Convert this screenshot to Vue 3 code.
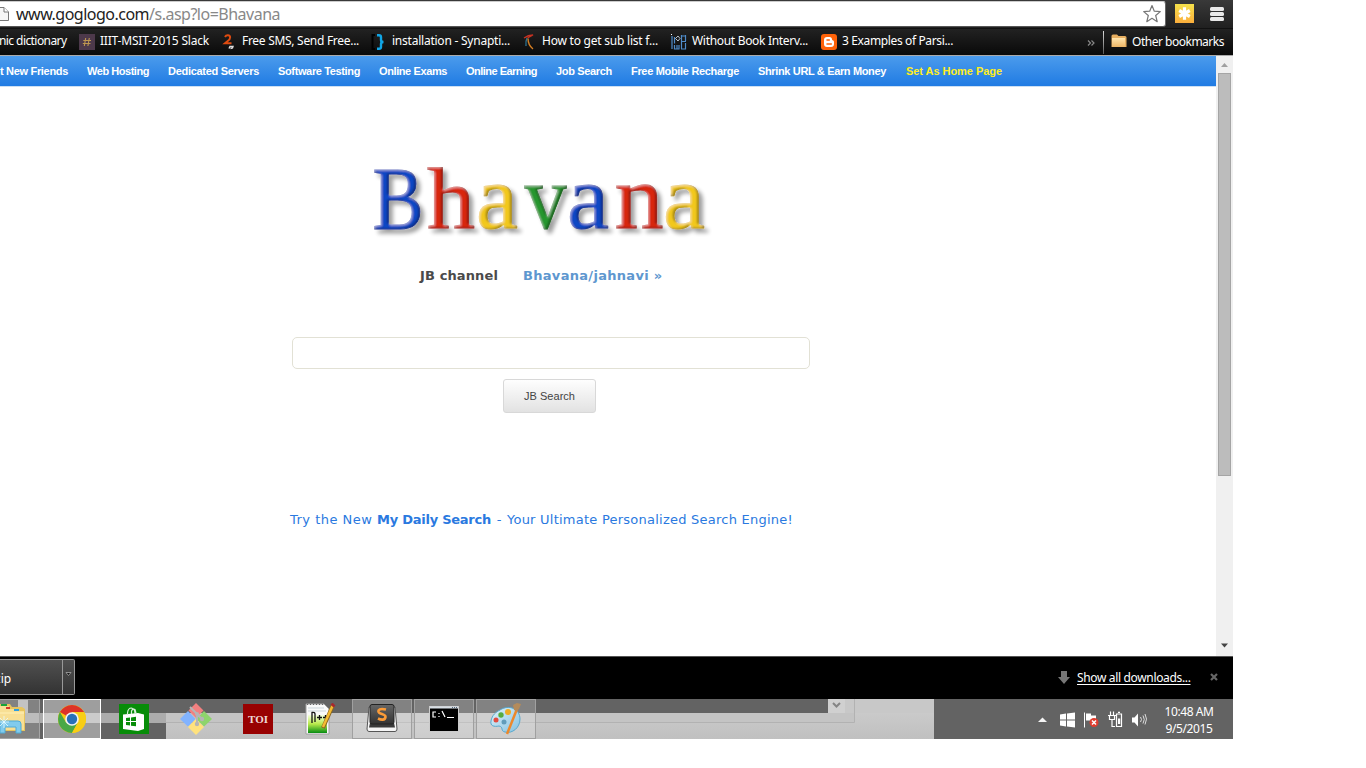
<script setup>
const bookmarks = [
  { t: 'nic dictionary', w: 67.5, icon: '' },
  { t: 'IIIT-MSIT-2015 Slack', w: 109, icon: 'slack' },
  { t: 'Free SMS, Send Free...', w: 117, icon: 'two' },
  { t: 'installation - Synapti...', w: 118, icon: 'brace' },
  { t: 'How to get sub list f...', w: 116, icon: 'arc' },
  { t: 'Without Book Interv...', w: 116, icon: 'web' },
  { t: '3 Examples of Parsi...', w: 111, icon: 'blogger' },
]
const nav = [
  ['t New Friends', 68], ['Web Hosting', 62], ['Dedicated Servers', 91], ['Software Testing', 82],
  ['Online Exams', 68], ['Online Earning', 71], ['Job Search', 56], ['Free Mobile Recharge', 108],
  ['Shrink URL & Earn Money', 128], ['Set As Home Page', 96],
]
const letters = [
  ['B', 372.5, 51, 'blue', 89], ['h', 427, 48, 'red', 87], ['a', 476, 42, 'gold', 90], ['v', 524.5, 42, 'green', 90],
  ['a', 567, 42, 'blue', 90], ['n', 614.5, 49, 'red', 90], ['a', 663, 42, 'gold', 90],
]
const colors = { blue: '#0846c4', red: '#d8260f', gold: '#f2c81f', green: '#27962e' }

/* Spreads letter spacing so that a label fills its given width. */
const vFit = {
  mounted(el, { value }) {
    el.style.letterSpacing = '0px'
    const natural = el.getBoundingClientRect().width
    el.style.letterSpacing = (value - natural) / el.textContent.length + 'px'
  },
}
</script>

<template>
  <div class="screen">
    <header class="toolbar">
      <div class="address">
        <svg class="doc" width="10" height="16" viewBox="0 0 10 16"><path d="M-4 1.500H4L8.500 6V14.500H-4Z" fill="#f6f6f6" stroke="#777" /><path d="M4 1.500V6H8.500" fill="#fff" stroke="#777" /></svg>
        <span class="url" v-fit="264">www.goglogo.com<i>/s.asp?lo=Bhavana</i></span>
        <svg class="star" width="20" height="20" viewBox="0 0 20 20"><path d="M10 1.500 12.300 7.200 18.300 7.600 13.700 11.500 15.200 17.700 10 14.300 4.800 17.700 6.300 11.500 1.700 7.600 7.700 7.200Z" fill="#fff" stroke="#777" stroke-width="1.200" stroke-linejoin="round" /></svg>
      </div>
      <svg class="ext" width="19" height="19" viewBox="0 0 19 19">
        <defs><linearGradient id="ye" x2="0" y2="1"><stop stop-color="#f5e14b" /><stop offset="1" stop-color="#fbae3c" /></linearGradient></defs>
        <rect width="19" height="19" fill="url(#ye)" /><path d="M9.500 3.300V15.700M4.200 6.500 14.800 12.500M4.200 12.500 14.800 6.500" stroke="#fff" stroke-width="3.200" />
      </svg>
      <svg class="menu" width="14" height="15" viewBox="0 0 14 15"><g fill="#e8e8e8"><rect y="0" width="14" height="4" rx="1.500" /><rect y="5" width="14" height="4" rx="1.500" /><rect y="10" width="14" height="4" rx="1.500" /></g></svg>
    </header>

    <div class="bookmarks">
      <div class="marks">
        <div v-for="b in bookmarks" :key="b.t" class="mark">
          <svg v-if="b.icon" width="16" height="16" viewBox="0 0 16 16">
            <g v-if="b.icon === 'slack'"><rect width="16" height="16" fill="#4d394b" /><path d="M6.700 4 5.300 12M10.300 4 8.900 12M4.300 6.500H12M3.800 9.500H11.500" stroke="#bd9650" stroke-width="1.100" /></g>
            <g v-else-if="b.icon === 'two'" fill="none"><path d="M3 3Q4 1 6 1.200C9 1.500 8.500 5 6 6.800L3 9.300H9.500" stroke="#df4b10" stroke-width="2" /><path d="M7 14.500 8 12.500H11L10.500 14 8.500 14.500" stroke="#ddd" stroke-width="1.400" /></g>
            <g v-else-if="b.icon === 'brace'" fill="none"><path d="M4 1H1.500V15H4" stroke="#000" stroke-width="2" /><path d="M6 1.200H8Q10 1.200 10 3V6Q10 8 12.500 8Q10 8 10 10V13Q10 14.800 8 14.800H6" stroke="#10a5e5" stroke-width="2.400" /></g>
            <g v-else-if="b.icon === 'arc'" fill="none"><path d="M3 4Q7 1 12 1L6.500 4" stroke="#c83222" stroke-width="1.300" /><path d="M6 4Q4.500 7 5 12" stroke="#2c7290" stroke-width="1.400" /><path d="M7 4.500Q7 11 12 15" stroke="#d47e23" stroke-width="1.400" /></g>
            <g v-else-if="b.icon === 'web'" fill="none" stroke="#4f8cca"><path d="M1 2V15M3.500 3V9.500M3.500 11V15H8V11M6 11V15M10.500 1V15M14.500 1V7M14.500 9V15H10M11 2H15M11 7.500H15" stroke-width="1.200" /><path d="M7 2 9 4.500 7 7 4.500 4.500Z" stroke="#dbe7f2" stroke-width=".8" /><path d="M0 .5H1" stroke="#fff" /></g>
            <g v-else><rect width="16" height="16" rx="3" fill="#ff6208" /><path d="M6 3H8.500Q11 3 11 5.500C11 6.500 13 6 13 8V10Q13 13 10 13H6Q3 13 3 10V6Q3 3 6 3Z" fill="#fff" /><path d="M6 6H8.300M6 10H10.300" stroke="#ff6208" stroke-width="1.500" stroke-linecap="round" /></g>
          </svg>
          <span v-fit="b.w">{{ b.t }}</span>
        </div>
      </div>
      <svg class="more" width="9" height="8" viewBox="0 0 9 8"><path d="M1 1.500 3.500 4 1 6.500M4.500 1.500 7 4 4.500 6.500" fill="none" stroke="#888" stroke-width="1.200" /></svg>
      <div class="divider"></div>
      <svg class="folder" width="16" height="14" viewBox="0 0 16 14">
        <defs><linearGradient id="fo" x2="0" y2="1"><stop stop-color="#ffe5ae" /><stop offset="1" stop-color="#edb565" /></linearGradient></defs>
        <path d="M.5 2Q.5 .5 2 .5H6L7.500 2H14Q15.500 2 15.500 3.500V13H.5Z" fill="#e6ae60" /><path d="M1 4H14V13H1Z" fill="url(#fo)" />
      </svg>
      <span class="other" v-fit="92">Other bookmarks</span>
    </div>

    <div class="view">
      <main class="page">
        <nav class="nav"><span v-for="n in nav" :key="n[0]"><b v-fit="n[1]">{{ n[0] }}</b></span></nav>
        <svg class="logo" width="350" height="120" viewBox="366 146 350 120">
          <defs>
            <filter id="bevel" x="-10%" y="-20%" width="130%" height="150%">
              <feGaussianBlur in="SourceAlpha" stdDeviation="2" result="s" />
              <feOffset in="s" dx="4" dy="4" result="so" />
              <feComponentTransfer in="so" result="shadow"><feFuncA type="linear" slope=".38" /></feComponentTransfer>
              <feGaussianBlur in="SourceAlpha" stdDeviation="1.100" result="b" />
              <feOffset in="b" dx="-1.800" dy="-1.200" result="bo" />
              <feComposite in="SourceAlpha" in2="bo" operator="out" result="edge" />
              <feComponentTransfer in="edge" result="dark"><feFuncA type="linear" slope=".6" /></feComponentTransfer>
              <feOffset in="b" dx="1.300" dy="1" result="lo" />
              <feFlood flood-color="#fff" flood-opacity=".38" />
              <feComposite in2="SourceAlpha" operator="in" />
              <feComposite in2="lo" operator="out" result="light" />
              <feMerge><feMergeNode in="shadow" /><feMergeNode in="SourceGraphic" /><feMergeNode in="light" /><feMergeNode in="dark" /></feMerge>
            </filter>
          </defs>
          <g filter="url(#bevel)" class="letters">
            <text v-for="(l, i) in letters" :key="i" :x="l[1]" y="228" :font-size="l[4]" :textLength="l[2]" lengthAdjust="spacingAndGlyphs" :fill="colors[l[3]]" :stroke="colors[l[3]]">{{ l[0] }}</text>
          </g>
        </svg>
        <div class="links"><span class="jb"><b v-fit="78">JB channel</b></span><b class="channel" v-fit="139.5">Bhavana/jahnavi »</b></div>
        <input class="query" aria-label="Search" />
        <button class="go"><span v-fit="51">JB Search</span></button>
        <p class="promo"><span v-fit="87">Try the New </span><b v-fit="114">My Daily Search</b><span class="dash"> - </span><span v-fit="286">Your Ultimate Personalized Search Engine!</span></p>
      </main>
      <aside class="scroll">
        <svg width="17" height="17"><path d="M5 11 8.500 7 12 11Z" fill="#a0a0a0" /></svg>
        <div class="thumb"></div>
        <svg class="down" width="17" height="17"><path d="M5 6.500H12L8.500 10.500Z" fill="#444" /></svg>
      </aside>
    </div>

    <footer class="downloads">
      <div class="file"><span>zip</span></div>
      <div class="drop"><svg width="7" height="5" viewBox="0 0 7 5"><path d="M1 .5H6L3.500 3.500Z" fill="#111" stroke="#aaa" stroke-width=".8" /></svg></div>
      <svg class="arrow" width="12" height="13" viewBox="0 0 12 13"><path d="M3 0H9V6H12L6 13 0 6H3Z" fill="#777" /></svg>
      <span class="all" v-fit="113.5">Show all downloads...</span>
      <svg class="close" width="8" height="8" viewBox="0 0 8 8"><path d="M1 1 7 7M7 1 1 7" stroke="#666" stroke-width="2.200" /></svg>
    </footer>

    <footer class="taskbar">
      <svg class="backdrop" width="1233" height="40">
        <defs><linearGradient id="lt" x2="0" y2="1"><stop stop-color="#cacaca" /><stop offset="1" stop-color="#c0c0c0" /></linearGradient></defs>
        <rect width="1233" height="40" fill="#636363" />
        <rect x="18" width="10" height="14" fill="#b4b4b4" /><rect x="18" y="14" width="148" height="10" fill="#acacac" />
        <rect x="166" y="14" width="768" height="26" fill="url(#lt)" /><rect x="828" width="106" height="14" fill="#c8c8c8" />
        <rect x="166" y="14" width="689" height="9" fill="#c4c4c4" /><path d="M166 23.500H854.500V0" fill="none" stroke="#b2b2b2" />
        <rect x="828" width="17" height="14" fill="#d0d0d0" /><path d="M833 4 836.500 7.500 840 4" fill="none" stroke="#858585" stroke-width="2" />
      </svg>
      <div class="tile explorer"><svg width="28" height="32" viewBox="0 0 28 32">
        <path d="M0 1H10L12 4H22L25 6V28H0Z" fill="#e7c45d" /><path d="M0 3H9V6H17V8H24V27H0Z" fill="#f8df94" /><path d="M1 2H7" stroke="#17a33a" stroke-width="2" /><path d="M6 5H10" stroke="#d7362c" stroke-width="2" /><path d="M14 7H19" stroke="#2d9ee2" stroke-width="2" /><path d="M0 10H24" stroke="#fff0b7" />
        <path d="M0 18H18Q21 18 21 21V30H16V24H5V30H0Z" fill="#81cbed" stroke="#4eaad6" /><path d="M4 13V25M-2 19H9M0 15 8 23M8 15 0 23" stroke="#e7fbff" stroke-width=".8" />
      </svg></div>
      <div class="tile chrome"><svg width="30" height="30" viewBox="0 0 30 30">
        <circle cx="15" cy="15" r="14" fill="#f7c911" /><path d="M15 15 2.900 8A14 14 0 0 1 27.100 8H15Z" fill="#dc3328" /><path d="M2.900 8A14 14 0 0 0 15 29L21 18.500 9 18.500Z" fill="#49a846" /><path d="M15 8.700H27.500A14 14 0 0 1 15 29L21 18Z" fill="#f8ce15" /><circle cx="15" cy="15" r="6.800" fill="#f2f2f2" /><circle cx="15" cy="15" r="5.200" fill="#2870b9" />
      </svg></div>
      <div class="tile"><svg width="30" height="30" viewBox="0 0 30 30"><rect width="30" height="30" fill="#078c08" /><path d="M4 10.500 19 9 25 10.500V25L19 27 4 25Z" fill="#fff" /><path d="M8.500 11V9Q9 4 12.500 4Q16 4.500 16 10M12.500 10V7Q14 4 16 5.500L17 9" fill="none" stroke="#d9f1d9" stroke-width="1.200" /><path d="M7 14 11 13.500V17H7ZM12 13.400 17 12.800V17H12ZM7 18H11V21.500L7 21ZM12 18H17V22.200L12 21.700Z" fill="#078c08" /></svg></div>
      <div class="tile"><svg width="32" height="32" viewBox="0 0 32 32"><path d="M16 0 23.500 7.500 16 15 8.500 7.500Z" fill="#f28080" /><path d="M8 8 15.500 16 8 23.500 0 16Z" fill="#82b3ff" /><path d="M24 8 32 16 24 23.500 16.500 16Z" fill="#8ed46c" /><path d="M16 16 24 24 16 32 8 24Z" fill="#ffe27d" /><path d="M10 4 17 11V22M17 11 22 16" fill="none" stroke="#b5b5b5" stroke-width="2" /><circle cx="17" cy="11" r="2" fill="#b5b5b5" /><circle cx="17" cy="21" r="2.200" fill="#b5b5b5" /><circle cx="22" cy="16" r="2.200" fill="#b5b5b5" /></svg></div>
      <div class="tile"><div class="toi">TOI</div></div>
      <div class="tile"><svg width="32" height="32" viewBox="0 0 32 32">
        <defs><linearGradient id="gr" x2="0" y2="1"><stop stop-color="#f4ffe0" /><stop offset=".5" stop-color="#b9e94b" /><stop offset="1" stop-color="#068c12" /></linearGradient></defs>
        <path d="M2 1H20L25 6V31H2Z" fill="#fafafa" stroke="#a0a0a0" /><path d="M4 5H20M4 8H22" stroke="#cbd5da" /><path d="M3 1.500H20" stroke="#666" stroke-dasharray="1 2" /><rect x="4" y="12" width="19" height="18" fill="url(#gr)" /><path d="M8 20V9.500Q11 9 11 11V19M13 14.500H18M15.500 12V17M19 14.500H24M21.500 12V17" fill="none" stroke="#111" stroke-width="1.300" /><path d="M29 2 19 25" stroke="#8b6620" stroke-width="4" /><path d="M28.500 3 19 24" stroke="#f5bb32" stroke-width="2.500" /><path d="M28 3 30 1" stroke="#a8282e" stroke-width="4" />
      </svg></div>
      <div class="tile open"><svg width="32" height="32" viewBox="0 0 32 32">
        <defs><linearGradient id="su" x2="0" y2="1"><stop stop-color="#666" /><stop offset="1" stop-color="#333" /></linearGradient></defs>
        <path d="M3 4H29L31 26Q31 28.500 29 28.500H3Q1 28.500 1 26Z" fill="#f5f5f5" stroke="#555" /><path d="M4 20H28L29 24.500H3Z" fill="#3a3a3a" /><rect x="4" y="1.500" width="24" height="19.500" rx="2" fill="url(#su)" stroke="#222" /><path d="M20 6.500Q14 5 12.500 7.500C11 11.500 20 10.500 19.500 14C19 17.500 15 17 12 15.500" fill="none" stroke="#fa9b38" stroke-width="2.600" />
      </svg></div>
      <div class="tile open"><svg width="30" height="26" viewBox="0 0 30 26"><rect x=".5" y=".5" width="29" height="25" fill="#000" stroke="#ccc" /><path d="M1 1.500H29" stroke="#d8dfe5" stroke-width="2" /><path d="M23 1.500H28" stroke="#51667a" stroke-dasharray="1 1" /><path d="M7 6H4V11H7M10 7V8M10 10V11M13 5 16 11M18 11.500H25" fill="none" stroke="#fff" stroke-width="1.200" /></svg></div>
      <div class="tile open"><svg width="34" height="34" viewBox="0 0 34 34">
        <defs><linearGradient id="pa" x2="1" y2="1"><stop stop-color="#e1f3fb" /><stop offset="1" stop-color="#83c0df" /></linearGradient></defs>
        <path d="M11 8C20 2 31 7 31 17C31 26 23 32 16 30C11 29 15 25 10 24C5 25 1 24 2 19C3 13 7 10 11 8Z" fill="url(#pa)" stroke="#58a8cd" /><circle cx="12" cy="13" r="2.700" fill="#56ac3f" /><circle cx="19" cy="10" r="3" fill="#eeac25" /><circle cx="7" cy="18" r="2.500" fill="#e34b3e" /><circle cx="15" cy="20" r="2.500" fill="#619cba" /><path d="M28 7 18 32" stroke="#ec882b" stroke-width="2.500" /><path d="M25 8 24 3 28 1 32 2 30 7 27 9Z" fill="#b48b5b" />
      </svg></div>
      <div class="tray">
        <svg width="102" height="18" viewBox="1037 710.5 102 18">
          <path d="M1038 722.500 1042.500 718 1047 722.500Z" fill="#f5f5f5" />
          <path d="M1060 715 1066 714V720H1060ZM1067 714 1075 713V720H1067ZM1060 721H1066V727L1060 726ZM1067 721H1075V728L1067 727Z" fill="#fff" />
          <path d="M1084.500 713V728" stroke="#fff" /><path d="M1086 714H1091V716H1096V721H1086Z" fill="#fff" /><circle cx="1094" cy="723" r="4.500" fill="#df3d2f" /><path d="M1092 721 1096 725M1096 721 1092 725" stroke="#fff" stroke-width="1.500" />
          <path d="M1110.500 712V716M1113.500 712V716M1108 716H1116M1109.500 716V720H1114.500V716M1112 720V727H1115" fill="none" stroke="#fff" stroke-width="1.200" /><path d="M1116.500 714.500H1121.500V727H1116.500ZM1118 712.800H1120" fill="#666" stroke="#fff" stroke-width="1.200" /><rect x="1118" y="719" width="2.200" height="5.500" fill="#fff" />
          <path d="M1132 718H1134.500L1138 714V727L1134.500 723H1132Z" fill="#fff" />
        </svg>
        <svg width="10" height="18" viewBox="0 0 10 18"><path d="M.5 7Q2.500 9.500 .5 12M3 5.500Q5.500 9.500 3 13.500M5 4Q8 9 5 14.500" fill="none" stroke="#ddd" stroke-width="1" /></svg>
      </div>
      <div class="clock"><span v-fit="49">10:48 AM</span><span v-fit="47">9/5/2015</span></div>
    </footer>
  </div>
</template>

<style>
body { background: #fff; overflow: hidden; }
</style>
<style scoped>
* { box-sizing: border-box; }
svg { display: block; flex: none; }
.screen { width: 1233px; height: 739px; display: flex; flex-direction: column; overflow: hidden; font: 12px "Noto Sans", "Open Sans", sans-serif; }
.screen span, .screen b { white-space: pre; }
.toolbar { height: 28px; flex: none; display: flex; background: linear-gradient(#393939, #202020); }
.address { width: 1166px; height: 26px; margin-top: 1px; background: #fff; border-right: 1px solid #666; border-bottom: 1px solid #555; border-top: 1px solid #ccc; border-radius: 0 3px 3px 0; display: flex; align-items: center; font-size: 16px; color: #222; }
.url { margin-left: 6px; }
.url i { font-style: normal; color: #888; }
.star { margin: 0 3px 0 auto; }
.ext { margin: 4px 0 0 9px; }
.menu { margin: 7px 0 0 16px; }
.bookmarks { height: 28px; flex: none; display: flex; align-items: center; background: linear-gradient(#222, #090909); color: #fff; border-top: 1px solid #111; border-bottom: 1px solid #aaa; }
.bookmarks span { padding-bottom: 2px; }
.marks { width: 1087px; display: grid; grid-template-columns: 79px 143px 149px 150px 150px 150px 150px; padding-bottom: 1px; }
.mark { display: flex; align-items: center; gap: 5px; height: 24px; }
.mark:nth-child(3) { gap: 4px; }
.mark:first-child span { margin-left: -1px; }
.divider { width: 1px; height: 23px; background: linear-gradient(#ddd, #555); margin-left: 7px; }
.more { margin-top: 2px; }
.folder { margin: 0 0 2px 7px; }
.other { margin-left: 5px; }
.view { height: 600px; flex: none; display: flex; }
.page { width: 1216px; display: flex; flex-direction: column; align-items: flex-start; background: #fff; }
.nav { width: 100%; height: 31px; flex: none; padding-bottom: 1px; display: grid; grid-template-columns: 87px 81px 110px 101px 87px 90px 75px 127px 148px 110px; align-items: center; background: linear-gradient(#4b9bec, #207be3); border-bottom: 1px solid #ccdff3; color: #fff; font: bold 11px "Liberation Sans", Arial, sans-serif; }
.nav span:last-child { color: #ffee22; }
.logo { margin: 59px 0 0 366px; }
.letters { font-family: "Liberation Serif", serif; stroke-width: 1; }
.links { margin: 2px 0 0 420px; height: 16px; display: flex; font: bold 13px/16px "DejaVu Sans", Verdana, sans-serif; color: #4a4a4a; }
.jb { width: 103px; }
.channel { color: #5e97cf; }
.query { width: 518px; height: 32px; margin: 53px 0 0 292px; padding: 0; border: 1px solid #e2e1d5; border-radius: 5px; background: #fff; }
.go { width: 93px; height: 34px; margin: 10px 0 0 503px; padding: 0; border: 1px solid #d8d8d8; border-radius: 3px; background: linear-gradient(#fefefe, #e2e2e2); color: #444; font: 11px "Liberation Sans", Arial, sans-serif; }
.promo { margin: 99px 0 0 290px; display: flex; font: 13px/16px "DejaVu Sans", Verdana, sans-serif; color: #2a79e0; }
.dash { width: 16px; text-align: center; }
.scroll { width: 17px; background: #f0f0f0; display: flex; flex-direction: column; }
.thumb { width: 13px; height: 403px; margin: 0 2px; background: #bcbcbc; border: 1px solid #a5a5a5; }
.down { margin: auto 0 2px; }
.downloads { height: 43px; flex: none; background: #000; border-top: 1px solid #555; display: flex; align-items: center; color: #fff; padding-bottom: 2px; }
.file { width: 63px; height: 36px; border: 1px solid #999; border-left: 0; background: linear-gradient(#505050, #333); display: flex; align-items: center; }
.file span { margin-left: -5px; padding-top: 2px; }
.drop { width: 12px; height: 36px; border: 1px solid #999; border-left: 0; background: linear-gradient(#505050, #333); padding: 12px 0 0 2px; border-radius: 0 2px 2px 0; }
.arrow { margin-left: 983px; }
.all { margin-left: 7px; text-decoration: underline; text-underline-offset: 2px; }
.close { margin-left: 19.5px; }
.taskbar { height: 40px; flex: none; position: relative; display: flex; }
.backdrop { position: absolute; left: 0; top: 0; }
.tile { position: relative; width: 60px; height: 40px; margin-right: 2px; display: flex; align-items: center; justify-content: center; border: 1px solid transparent; flex: none; }
.explorer { width: 40px; justify-content: flex-start; border-color: #a5a5a5; border-left: 0; background: rgba(255, 255, 255, .2); }
.chrome { width: 58px; margin: 0 3px 0 1px; border: 1px solid #fff; background: rgba(255, 255, 255, .38); }
.open { border-color: #a0a0a0; background: rgba(255, 255, 255, .2); }
.toi { width: 30px; height: 30px; background: #980101; color: #eed7d7; font: bold 11px/30px "Liberation Serif", serif; text-align: center; }
.tray { position: relative; display: flex; align-items: center; gap: 1px; margin-left: 499px; }
.clock { position: relative; width: 78px; display: flex; flex-direction: column; align-items: center; padding-top: 4px; line-height: 17px; color: #fff; }
</style>
